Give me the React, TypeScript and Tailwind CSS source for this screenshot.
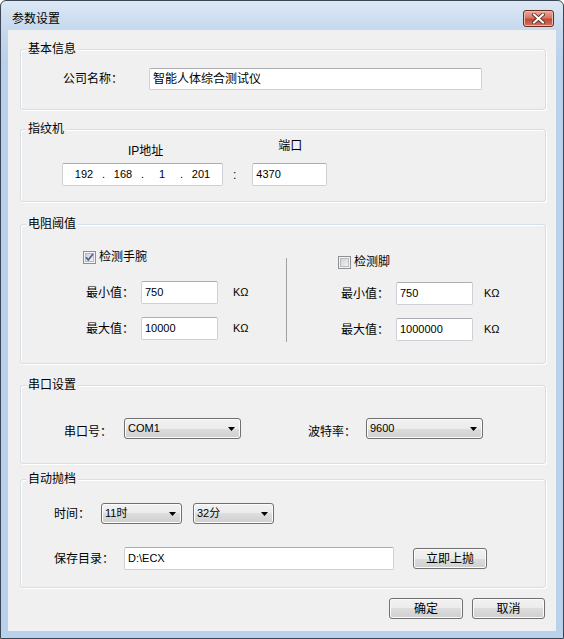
import type { ReactNode } from "react";

function GroupBox({
  title,
  className,
  children,
}: {
  title: string;
  className: string;
  children: ReactNode;
}) {
  return (
    <div
      className={`relative shrink-0 rounded-[3px] border border-[#d5dfe5] shadow-[inset_1px_1px_0_#ffffff,1px_1px_0_#ffffff] ${className}`}
    >
      <span className="absolute left-[5px] top-[-8px] bg-[#f0f0f0] px-[2px] text-[12px] leading-[14px]">
        {title}
      </span>
      {children}
    </div>
  );
}

function TextBox({ className, children }: { className: string; children?: ReactNode }) {
  return (
    <div
      className={`flex shrink-0 items-center rounded-[2px] border border-[#cdd1d7] border-t-[#abadb3] bg-white pl-[3px] ${className}`}
    >
      {children}
    </div>
  );
}

function Arrow() {
  return (
    <svg width="7" height="4" viewBox="0 0 7 4">
      <path d="M0 0 H7 L3.5 4 Z" fill="#000" />
    </svg>
  );
}

function Combo({ className, value }: { className: string; value: string }) {
  return (
    <div
      className={`flex h-[21px] shrink-0 items-center justify-between rounded-[3px] border border-[#707070] bg-[linear-gradient(#f2f2f2,#ebebeb_50%,#dddddd_50%,#cfcfcf)] pl-[3px] pr-[5px] text-[11px] shadow-[inset_0_0_0_1px_#fbfbfb] ${className}`}
    >
      <span>{value}</span>
      <Arrow />
    </div>
  );
}

function Button({ className, label }: { className: string; label: string }) {
  return (
    <div
      className={`flex h-[21px] shrink-0 items-center justify-center rounded-[3px] border border-[#707070] bg-[linear-gradient(#f2f2f2,#ebebeb_50%,#dddddd_50%,#cfcfcf)] text-[12px] leading-[14px] shadow-[inset_0_0_0_1px_#fbfbfb] ${className}`}
    >
      {label}
    </div>
  );
}

function CheckBox({ checked }: { checked: boolean }) {
  return (
    <svg width="13" height="13" viewBox="0 0 13 13" className="shrink-0">
      <defs>
        <linearGradient id={checked ? "cb1" : "cb2"} x1="0" y1="0" x2="1" y2="1">
          <stop offset="0" stopColor="#cbcfd5" />
          <stop offset="1" stopColor="#f6f6f6" />
        </linearGradient>
      </defs>
      <rect x="0.5" y="0.5" width="12" height="12" fill="#f4f4f4" stroke="#8f8f8f" />
      <rect x="2.5" y="2.5" width="8" height="8" fill={`url(#${checked ? "cb1" : "cb2"})`} stroke="#b8bcc2" />
      {checked && (
        <path d="M3 6.3 L5.3 9 L10 3" fill="none" stroke="#4c5e94" strokeWidth="1.7" />
      )}
    </svg>
  );
}

function RangeRow({
  label,
  value,
  unitGap,
  className,
}: {
  label: string;
  value: string;
  unitGap: string;
  className: string;
}) {
  return (
    <div className={`flex h-[23px] items-center ${className}`}>
      <span className="ml-[3px] w-[55px] text-[12px] leading-[14px]">{label}</span>
      <TextBox className="h-[23px] w-[77px] text-[11px]">{value}</TextBox>
      <span className={`text-[11px] ${unitGap}`}>KΩ</span>
    </div>
  );
}

export default function App() {
  return (
    <div className="flex h-[639px] w-[564px] flex-col rounded-t-[6px] border border-[#3b4756] bg-[linear-gradient(#dde8f4,#c6d9ee_28px,#b9d1ea_60px,#b9d1ea)] font-['Liberation_Sans','Noto_Sans_CJK_SC',sans-serif] text-black">
      {/* 标题栏 */}
      <div className="flex h-[29px] shrink-0 items-start justify-between pl-[11px] pr-[9px]">
        <span className="mt-[11px] text-[12px] leading-[14px]">参数设置</span>
        <div className="mt-[9px] flex h-[17px] w-[31px] items-center justify-center rounded-[3px] border border-[#6b2a22] bg-[linear-gradient(#e9a99b,#d47865_45%,#c24a35_55%,#d0735f)] shadow-[inset_0_0_0_1px_#f0b8aa]">
          <svg width="13" height="11" viewBox="0 0 13 11">
            <path d="M2 1.5 L11 9.5 M11 1.5 L2 9.5" stroke="#4a2620" strokeWidth="3.6" strokeLinecap="square" />
            <path d="M2 1.5 L11 9.5 M11 1.5 L2 9.5" stroke="#ffffff" strokeWidth="2" strokeLinecap="square" />
          </svg>
        </div>
      </div>

      {/* 内容区 */}
      <div className="mx-[7px] flex h-[601px] flex-col bg-[#f0f0f0] pl-[12px] pr-[10px] pt-[19px]">
        <GroupBox title="基本信息" className="h-[61px]">
          <div className="flex items-center pt-[18px]">
            <span className="ml-[42px] w-[86px] text-[12px] leading-[14px]">公司名称：</span>
            <TextBox className="h-[22px] w-[333px] text-[12px]">智能人体综合测试仪</TextBox>
          </div>
        </GroupBox>

        <GroupBox title="指纹机" className="mt-[19px] h-[73px]">
          <div className="flex items-end pt-[9px]">
            <div className="ml-[41px] flex w-[161px] flex-col">
              <span className="pl-[66px] text-[12px] leading-[14px]">IP地址</span>
              <TextBox className="mt-[5px] h-[23px] w-[161px] pl-[6px] text-[11px]">
                {["192", "168", "1", "201"].map((n, i) => (
                  <div key={n} className="flex">
                    {i > 0 && <span className="w-[9px] text-center">.</span>}
                    <span className="w-[30px] text-center">{n}</span>
                  </div>
                ))}
              </TextBox>
            </div>
            <span className="ml-[10px] mr-[16px] flex h-[23px] items-center text-[12px]">:</span>
            <div className="flex flex-col">
              <span className="pl-[26px] text-[12px] leading-[14px]">端口</span>
              <TextBox className="mt-[10px] h-[23px] w-[75px] text-[11px]">4370</TextBox>
            </div>
          </div>
        </GroupBox>

        <GroupBox title="电阻阈值" className="mt-[22px] h-[140px]">
          <div className="flex items-start">
            <div className="ml-[62px] mt-[25px] flex w-[203px] flex-col">
              <div className="flex h-[14px] items-center gap-[3px]">
                <CheckBox checked />
                <span className="text-[12px] leading-[14px]">检测手腕</span>
              </div>
              <RangeRow label="最小值：" value="750" unitGap="ml-[15px]" className="mt-[17px]" />
              <RangeRow label="最大值：" value="10000" unitGap="ml-[15px]" className="mt-[13px]" />
            </div>
            <div className="mt-[33px] h-[84px] w-[1px] bg-[#a0a0a0]" />
            <div className="ml-[51px] mt-[30px] flex flex-col">
              <div className="flex h-[14px] items-center gap-[3px]">
                <CheckBox checked={false} />
                <span className="text-[12px] leading-[14px]">检测脚</span>
              </div>
              <RangeRow label="最小值：" value="750" unitGap="ml-[11px]" className="mt-[13px]" />
              <RangeRow label="最大值：" value="1000000" unitGap="ml-[11px]" className="mt-[13px]" />
            </div>
          </div>
        </GroupBox>

        <GroupBox title="串口设置" className="mt-[21px] h-[79px]">
          <div className="flex items-start pt-[32px]">
            <span className="ml-[43px] mt-[7px] w-[60px] text-[12px] leading-[14px]">串口号：</span>
            <Combo className="w-[117px]" value="COM1" />
            <span className="ml-[67px] mt-[7px] w-[58px] text-[12px] leading-[14px]">波特率：</span>
            <Combo className="w-[117px]" value="9600" />
          </div>
        </GroupBox>

        <GroupBox title="自动抛档" className="mt-[15px] h-[109px]">
          <div className="flex items-center pt-[23px]">
            <span className="ml-[33px] w-[47px] text-[12px] leading-[14px]">时间：</span>
            <Combo className="w-[81px]" value="11时" />
            <Combo className="ml-[11px] w-[81px]" value="32分" />
          </div>
          <div className="mt-[23px] flex items-center">
            <span className="ml-[33px] w-[70px] text-[12px] leading-[14px]">保存目录：</span>
            <TextBox className="h-[23px] w-[270px] text-[11px]">D:\ECX</TextBox>
            <Button className="ml-[19px] w-[74px]" label="立即上抛" />
          </div>
        </GroupBox>

        <div className="mt-[10px] flex justify-end gap-[9px] pr-[1px]">
          <Button className="w-[74px]" label="确定" />
          <Button className="w-[73px]" label="取消" />
        </div>
      </div>
    </div>
  );
}
